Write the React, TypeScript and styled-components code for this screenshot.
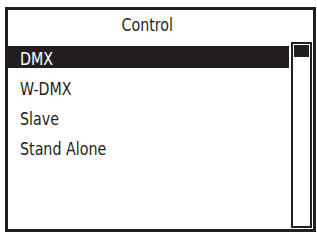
import styled, { createGlobalStyle } from 'styled-components';

const GlobalStyle = createGlobalStyle`
  html, body {
    margin: 0;
    padding: 0;
    background: #fff;
  }
  body {
    font-family: 'Liberation Sans Narrow', 'DejaVu Sans Condensed', 'Liberation Sans', sans-serif;
    color: #231f20;
  }
`;

const Screen = styled.div`
  box-sizing: border-box;
  margin: 7px 0 0 5px;
  width: 311px;
  height: 225px;
  border: 3px solid #231f20;
  display: flex;
  flex-direction: column;
`;

const Title = styled.div`
  height: 31px;
  padding: 0 26px 3px 0;
  display: flex;
  align-items: center;
  justify-content: center;
  font-size: 18px;
  box-sizing: border-box;
`;

// condensed look of the device font
const Label = styled.span<{ $origin?: string }>`
  display: inline-block;
  transform: scaleX(0.88);
  transform-origin: ${({ $origin }) => $origin ?? 'left'};
  white-space: nowrap;
`;

const Body = styled.div`
  flex: 1;
  display: flex;
  gap: 2px;
  padding: 0 1px 1px 0;
  min-height: 0;
`;

const List = styled.ul`
  flex: 1;
  list-style: none;
  margin: 0;
  padding: 5px 0 0 0;
  display: flex;
  flex-direction: column;
  gap: 8px;
`;

const Item = styled.li<{ $active?: boolean }>`
  height: 22px;
  line-height: 22px;
  padding-left: 12px;
  padding-top: 2px;
  box-sizing: border-box;
  font-size: 18px;
  background: ${({ $active }) => ($active ? '#231f20' : 'transparent')};
  color: ${({ $active }) => ($active ? '#fff' : '#231f20')};
`;

const ScrollTrack = styled.div`
  box-sizing: border-box;
  width: 21px;
  margin-top: 1px;
  border: 2px solid #231f20;
  padding: 1px;
`;

const Thumb = styled.div`
  height: 12px;
  background: #231f20;
`;

const items = ['DMX', 'W-DMX', 'Slave', 'Stand Alone'];

const App = () => {
  return (
    <>
      <GlobalStyle />
      <Screen>
        <Title>
          <Label $origin="center">Control</Label>
        </Title>
        <Body>
          <List>
            {items.map((item, i) => (
              <Item key={item} $active={i === 0}>
                <Label>{item}</Label>
              </Item>
            ))}
          </List>
          <ScrollTrack>
            <Thumb />
          </ScrollTrack>
        </Body>
      </Screen>
    </>
  );
};

export default App;
